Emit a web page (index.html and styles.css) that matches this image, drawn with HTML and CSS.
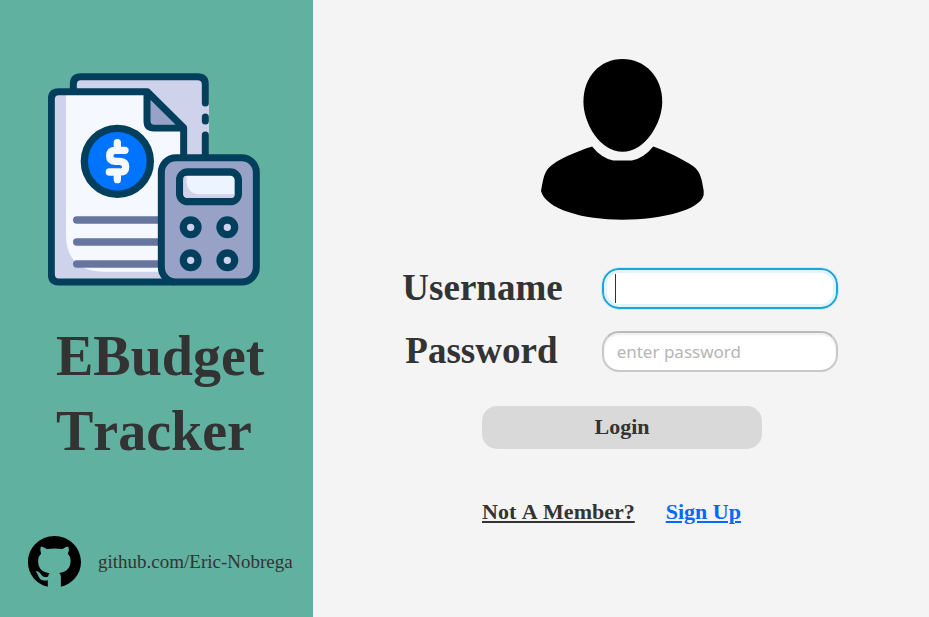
FILE: index.html
```html
<!DOCTYPE html>
<html lang="en">
<head>
  <meta charset="utf-8">
  <title>EBudget Tracker</title>
  <link rel="stylesheet" href="styles.css">
</head>
<body>
  <div class="app">
    <aside class="brand">
      <svg class="brand-logo" viewBox="24 24 636 638" aria-hidden="true">
        <path d="M100 90V56Q100 34 122 34H475Q507 34 507 60V290H100Z" fill="#ced3eb"/>
        <path d="M34 100Q34 80 54 80H322L431 188V650H54Q34 650 34 630Z" fill="#f5f8ff"/>
        <path d="M44 90H78V515Q82 618 190 620H400V642H44Z" fill="#ced3eb"/>
        <path d="M330 98V178H418Z" fill="#98a2c6"/>
        <g fill="none" stroke="#023f5c" stroke-width="21" stroke-linecap="round">
          <path d="M100 78V58Q100 35 123 35H472Q496 35 496 58V114M496 156V168M496 210V280"/>
          <path d="M431 280V188L322 80H56Q34 80 34 102V628Q34 651 56 651H400M321 84V168Q321 189 342 189H428" stroke-linejoin="round"/>
        </g>
        <path d="M110 465H360M110 531H360M110 597H360" stroke="#65759d" stroke-width="22" stroke-linecap="round"/>
        <circle cx="232" cy="289" r="99" fill="#0074ff" stroke="#023f5c" stroke-width="22"/>
        <path d="M232 233V248M232 331V344M255 256H226Q209 256 209 272Q209 288 226 289H239Q257 290 257 305Q257 321 239 321H208" fill="none" stroke="#f5f8ff" stroke-width="22" stroke-linecap="round"/>
        <rect x="364" y="278" width="285" height="373" rx="44" fill="#98a2c6" stroke="#023f5c" stroke-width="21"/>
        <rect x="419" y="321" width="176" height="89" rx="24" fill="#ecf5ff" stroke="#023f5c" stroke-width="22"/>
        <path d="M430 338Q431 332 440 332V350Q442 387 482 388H584Q584 399 575 399H440Q430 398 430 388Z" fill="#ced3eb"/>
        <g fill="#ced3eb" stroke="#023f5c" stroke-width="22">
          <circle cx="452" cy="487" r="22"/>
          <circle cx="562" cy="487" r="22"/>
          <circle cx="452" cy="586" r="22"/>
          <circle cx="562" cy="586" r="22"/>
        </g>
      </svg>
      <h1 class="brand-name">EBudget Tracker</h1>
      <a class="brand-link" href="https://github.com/Eric-Nobrega">
        <svg class="github-mark" viewBox="25 35 158 152" aria-hidden="true">
          <path d="M84 186C49 178 25 149 25 113C25 70 60 35 104 35C148 35 183 70 183 113C183 148 157 178 123 186V156Q123 149 118 145C139 142 152 132 152 108Q152 96 144 88Q150 77 145 66Q137 67 128 74Q104 70 81 74Q71 67 63 66Q60 77 64 88Q55 96 55 108C55 132 68 144 90 146Q85 150 85 156Q76 160 68 154C61 145 58 140 47 140C56 147 55 163 69 167Q77 169 84 167Z"/>
        </svg>
        <span>github.com/Eric-Nobrega</span>
      </a>
    </aside>

    <main class="login">
      <svg class="avatar" viewBox="34 27 488 482" aria-hidden="true">
        <path d="M278 27C345 27 397 80 397 155C397 218 346 305 278 305C211 305 161 220 161 155C161 80 211 27 278 27Z"/>
        <path d="M187 289Q214 323 250 331H306Q343 323 370 289C412 304 461 328 491 349C513 365 516 392 521 421V434C511 479 394 508 278 508C158 508 48 476 34 422C39 398 41 369 58 352C83 328 137 305 187 289Z"/>
      </svg>
      <form class="login-form">
        <div class="fields">
          <label for="username">Username</label>
          <input class="field field-active" id="username" type="text">
          <label for="password">Password</label>
          <input class="field" id="password" type="password" placeholder="enter password">
        </div>
        <button class="login-button" type="submit">Login</button>
      </form>
      <nav class="links">
        <a class="member-link" href="#member">Not A Member?</a>
        <a class="signup-link" href="#signup">Sign Up</a>
      </nav>
    </main>
  </div>
</body>
</html>
```

FILE: styles.css
```css
* {
  box-sizing: border-box;
}

body {
  margin: 0;
  background: #f4f4f4;
  color: #333;
  font-family: "Liberation Serif", "Times New Roman", serif;
  font-kerning: none;
}

.app {
  display: flex;
  min-height: 100vh;
}

.brand {
  flex: 0 0 313px;
  display: flex;
  flex-direction: column;
  align-items: flex-start;
  padding: 73px 20px 30px 28px;
  background: #61b1a0;
}

.brand-logo {
  width: 212px;
  margin-left: 20px;
}

.brand-name {
  margin: 33px 0 0 28px;
  font-size: 56px;
  line-height: 75px;
}

.brand-link {
  display: flex;
  align-items: center;
  gap: 17px;
  margin-top: auto;
  color: #333;
  font-size: 19px;
  text-decoration: none;
}

.github-mark {
  width: 53px;
}

.login {
  flex: 1;
  display: flex;
  flex-direction: column;
  align-items: center;
  padding: 59px 24px 24px 26px;
}

.avatar {
  width: 163px;
}

.login-form {
  display: flex;
  flex-direction: column;
  align-items: center;
  margin-top: 48px;
}

.fields {
  display: grid;
  grid-template-columns: auto 236px;
  align-items: center;
  gap: 22px 39px;
  padding-right: 4px;
  font-size: 37px;
  line-height: 40px;
  font-weight: bold;
}

.fields label:last-of-type {
  padding-left: 3px;
}

.field {
  width: 100%;
  height: 41px;
  padding: 0 13px;
  border: 2px solid #c8c8c8;
  border-top-color: #bababa;
  border-radius: 17px;
  background: #fff;
  box-shadow: inset 0 2px 3px #ededed;
  color: #333;
  font: 17px "Noto Sans", sans-serif;
}

.field::placeholder {
  color: #b5b5b5;
}

.field-active,
.field:focus {
  border-color: #1ba6d9;
  outline: 1px solid #cdebf6;
  box-shadow: inset 0 0 0 3px #e2f3f9;
}

.field-active {
  background: linear-gradient(#333, #333) 11px center / 1px 29px no-repeat #fff;
}

.login-button {
  width: 280px;
  height: 43px;
  margin-top: 34px;
  border: 0;
  border-radius: 15px;
  background: #d9d9d9;
  color: #333;
  font: bold 22px "Liberation Serif", "Times New Roman", serif;
}

.links {
  display: flex;
  gap: 31px;
  width: 280px;
  margin-top: 50px;
  font-size: 22px;
  line-height: 26px;
  font-weight: bold;
}

.member-link {
  color: #333;
}

.signup-link {
  color: #0068ff;
}
```
